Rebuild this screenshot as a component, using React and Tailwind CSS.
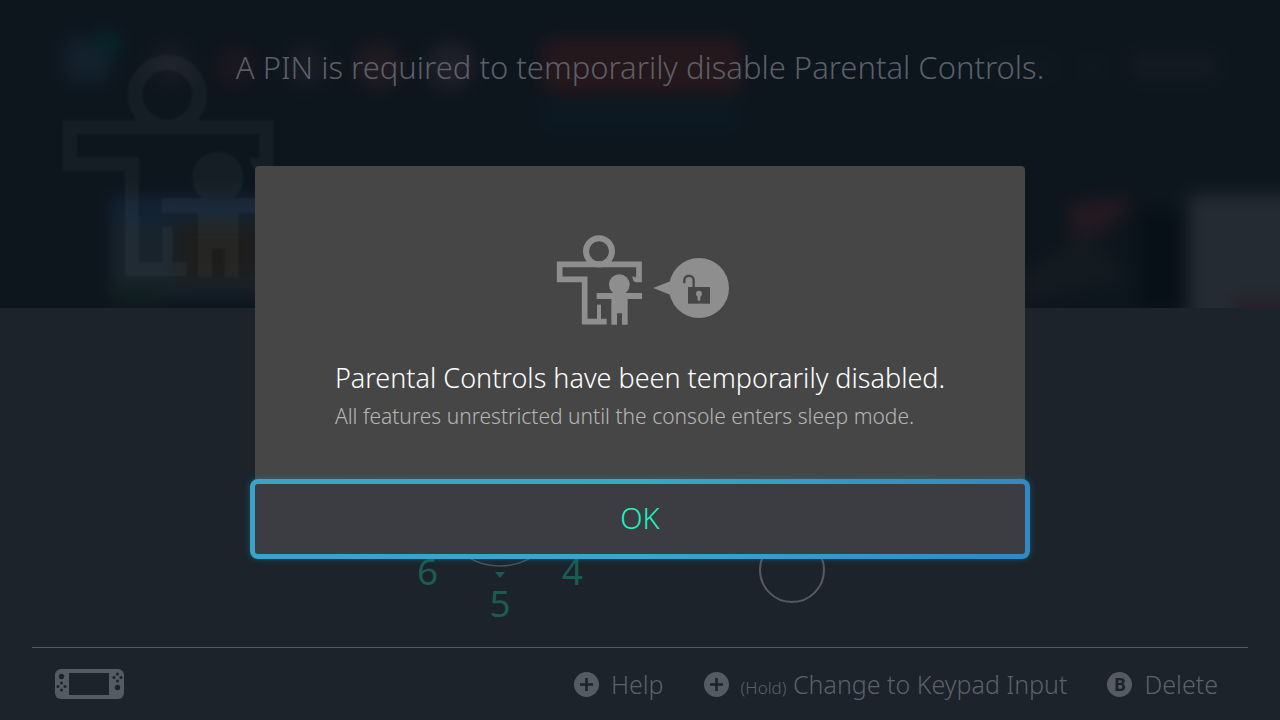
import React, { useState } from "react";

// Adult holding a child, used in the dialog and as the page emblem
function ParentFigure() {
  return (
    <g>
      <circle cx="177" cy="94" r="39" fill="none" stroke="currentColor" strokeWidth="18" />
      <path
        d="M286 178H297V133H59V178H134V305H200"
        fill="none"
        stroke="currentColor"
        strokeWidth="17"
      />
      <path d="M276 169L290 174V186H284L280 181Z" fill="currentColor" />
      <path d="M171 254h12v46h-12z" fill="currentColor" />
      <circle cx="238" cy="194" r="31" fill="currentColor" />
      <path
        d="M170 219H306V237H263V314H246V280H231V314H214V237H170Z"
        fill="currentColor"
      />
    </g>
  );
}

function UnlockedIcon() {
  return (
    <svg
      viewBox="33 45 534 270"
      className="mx-auto h-[90px] w-[178px] text-[#8e8e8e]"
      aria-hidden="true"
    >
      <ParentFigure />
      <circle cx="477" cy="204" r="90" fill="currentColor" />
      <path d="M340 204L394 182V226Z" fill="currentColor" />
      <path d="M444 201h66v50h-66z" fill="#464646" />
      <path
        d="M461 203V181C461 163 433 163 433 181V190"
        fill="none"
        stroke="#464646"
        strokeWidth="7"
      />
      <circle cx="477" cy="221" r="9" fill="currentColor" />
      <path d="M473 224h8v18h-8z" fill="currentColor" />
    </svg>
  );
}

// Blurred home menu behind the header
function Backdrop() {
  return (
    <svg
      viewBox="0 0 1280 308"
      preserveAspectRatio="none"
      className="absolute inset-0 h-full w-full"
      aria-hidden="true"
    >
      <defs>
        <filter
          id="soft"
          x="-10%"
          y="-20%"
          width="120%"
          height="140%"
          colorInterpolationFilters="sRGB"
        >
          <feGaussianBlur stdDeviation="9" />
        </filter>
        <filter id="edge" colorInterpolationFilters="sRGB">
          <feGaussianBlur stdDeviation="1.500" />
        </filter>
      </defs>
      <rect width="1280" height="308" fill="#0d151d" />
      <g filter="url(#soft)">
        <rect x="-60" y="-60" width="1400" height="440" fill="#0d151d" />
        <rect x="64" y="38" width="46" height="44" fill="#13212c" />
        <circle cx="108" cy="44" r="14" fill="#08252b" />
        <circle cx="170" cy="64" r="22" fill="#161b24" />
        <circle cx="236" cy="66" r="22" fill="#1a171f" />
        <circle cx="306" cy="66" r="22" fill="#181c25" />
        <circle cx="378" cy="66" r="24" fill="#211b21" />
        <circle cx="450" cy="66" r="24" fill="#201f2a" />
        <rect x="542" y="38" width="200" height="56" rx="10" fill="#25181d" />
        <rect x="542" y="102" width="196" height="30" fill="#0c1922" />
        <rect x="990" y="52" width="64" height="30" fill="#10181f" />
        <rect x="1084" y="54" width="20" height="26" fill="#11191f" />
        <rect x="1130" y="50" width="88" height="32" fill="#131a21" />
        <rect x="110" y="196" width="160" height="100" fill="#18232c" />
        <rect x="112" y="198" width="150" height="24" fill="#122235" />
        <rect x="176" y="222" width="86" height="58" fill="#1d1e1c" />
        <rect x="112" y="284" width="52" height="20" fill="#12201f" />
        <path d="M1068 202L1136 196L1112 228L1072 244Z" fill="#241a20" />
        <path d="M1022 270L1090 230L1130 280L1022 306Z" fill="#131a20" />
        <rect x="1140" y="210" width="44" height="100" fill="#070f17" />
        <rect x="1188" y="194" width="140" height="160" fill="#242b32" />
        <rect x="1236" y="300" width="90" height="40" fill="#281d27" />
      </g>
      <g
        transform="translate(21 17) scale(0.827)"
        className="text-white"
        opacity="0.035"
        filter="url(#edge)"
      >
        <ParentFigure />
      </g>
    </svg>
  );
}

function ConsoleIcon() {
  return (
    <svg viewBox="0 0 69 30" className="h-[30px] w-[69px]" aria-hidden="true">
      <rect width="69" height="30" rx="6" fill="#555b63" />
      <g fill="#1c232b">
        <rect x="14" y="4" width="40" height="22" />
        <circle cx="6.500" cy="7.500" r="2.700" />
        <circle cx="6.500" cy="14" r="1.500" />
        <circle cx="6.500" cy="21" r="1.500" />
        <circle cx="3" cy="17.500" r="1.500" />
        <circle cx="10" cy="17.500" r="1.500" />
        <circle cx="62.500" cy="5" r="1.500" />
        <circle cx="62.500" cy="12" r="1.500" />
        <circle cx="59" cy="8.500" r="1.500" />
        <circle cx="66" cy="8.500" r="1.500" />
        <circle cx="62.500" cy="18.500" r="2.700" />
      </g>
    </svg>
  );
}

function PlusBadge() {
  return (
    <svg viewBox="0 0 25 25" className="h-[25px] w-[25px] shrink-0" aria-hidden="true">
      <circle cx="12.500" cy="12.500" r="12.500" fill="#555b63" />
      <path d="M12.500 6v13M6 12.500h13" stroke="#1c232b" strokeWidth="2.600" />
    </svg>
  );
}

function PinDial() {
  return (
    <div className="flex items-end justify-center gap-[176px] pr-[38px]">
      <div className="relative w-[166px] text-center text-[37px] font-normal leading-[44px] text-[#1b5b52]">
        <svg
          viewBox="0 0 126 126"
          className="absolute bottom-[58px] left-[20px] h-[126px] w-[126px]"
          aria-hidden="true"
        >
          <circle cx="63" cy="63" r="62" fill="none" stroke="#4f545b" strokeWidth="1.500" />
        </svg>
        <div className="flex justify-between">
          <span>6</span>
          <span>4</span>
        </div>
        <svg
          viewBox="0 0 10 6"
          className="absolute left-[78px] top-[23px] h-[6px] w-[10px]"
          aria-hidden="true"
        >
          <path d="M0 0h10L5 6z" fill="#1b5b52" />
        </svg>
        <div className="-mt-3">5</div>
      </div>
      <div className="mb-[22px] h-[66px] w-[66px] rounded-full border-2 border-[#555a61]" />
    </div>
  );
}

function Hint({ badge, children }) {
  return (
    <button type="button" className="flex items-center gap-3 text-[25px] leading-9">
      {badge}
      <span className="whitespace-nowrap">{children}</span>
    </button>
  );
}

export default function App() {
  const [open, setOpen] = useState(true);

  return (
    <div className="relative flex min-h-screen flex-col overflow-hidden bg-[#1c232b] font-['Noto_Sans',sans-serif] font-light text-[#5b6169]">
      <header className="relative h-[308px] bg-[#0d151d] pt-11">
        <Backdrop />
        <h1 className="relative text-center text-[31px] leading-[46px] text-[#5c5f67]">
          A PIN is required to temporarily disable Parental Controls.
        </h1>
      </header>

      <main className="flex flex-1 flex-col justify-end pb-[22px]">
        <PinDial />
      </main>

      <footer className="mx-8 flex items-center justify-between border-t border-[#555b63] py-[18px] pl-[23px] pr-[30px]">
        <ConsoleIcon />
        <div className="flex items-center gap-10">
          <Hint badge={<PlusBadge />}>Help</Hint>
          <Hint badge={<PlusBadge />}>
            <small className="text-[17px] leading-none">(Hold)</small> Change to Keypad Input
          </Hint>
          <Hint
            badge={
              <span className="flex h-[25px] w-[25px] items-center justify-center rounded-full bg-[#555b63] text-[18px] font-bold leading-none text-[#1c232b]">
                B
              </span>
            }
          >
            Delete
          </Hint>
        </div>
      </footer>

      {open && (
        <div className="fixed inset-0 flex items-center justify-center">
          <div
            role="dialog"
            aria-labelledby="dialog-title"
            className="w-[770px] max-w-full rounded-[4px] bg-[#464646]"
          >
            <div className="pb-[50px] pt-[69px]">
              <UnlockedIcon />
              <div className="mx-auto mt-[33px] w-fit">
                <h2 id="dialog-title" className="text-[27px] leading-10 text-white">
                  Parental Controls have been temporarily disabled.
                </h2>
                <p className="text-[21px] leading-9 text-[#b6b6b6]">
                  All features unrestricted until the console enters sleep mode.
                </p>
              </div>
            </div>
            <div className="-m-[5px] rounded-lg bg-linear-to-r from-[#3aa3c8] via-[#35a9c6] to-[#3288c4] p-[5px] shadow-[0_0_6px_rgba(30,140,160,0.500)]">
              <button
                type="button"
                onClick={() => setOpen(false)}
                className="block w-full rounded-[3px] bg-[#3b3d43] pb-4 pt-3.5 text-[29px] leading-10 text-[#1ff2bc]"
              >
                OK
              </button>
            </div>
          </div>
        </div>
      )}
    </div>
  );
}
